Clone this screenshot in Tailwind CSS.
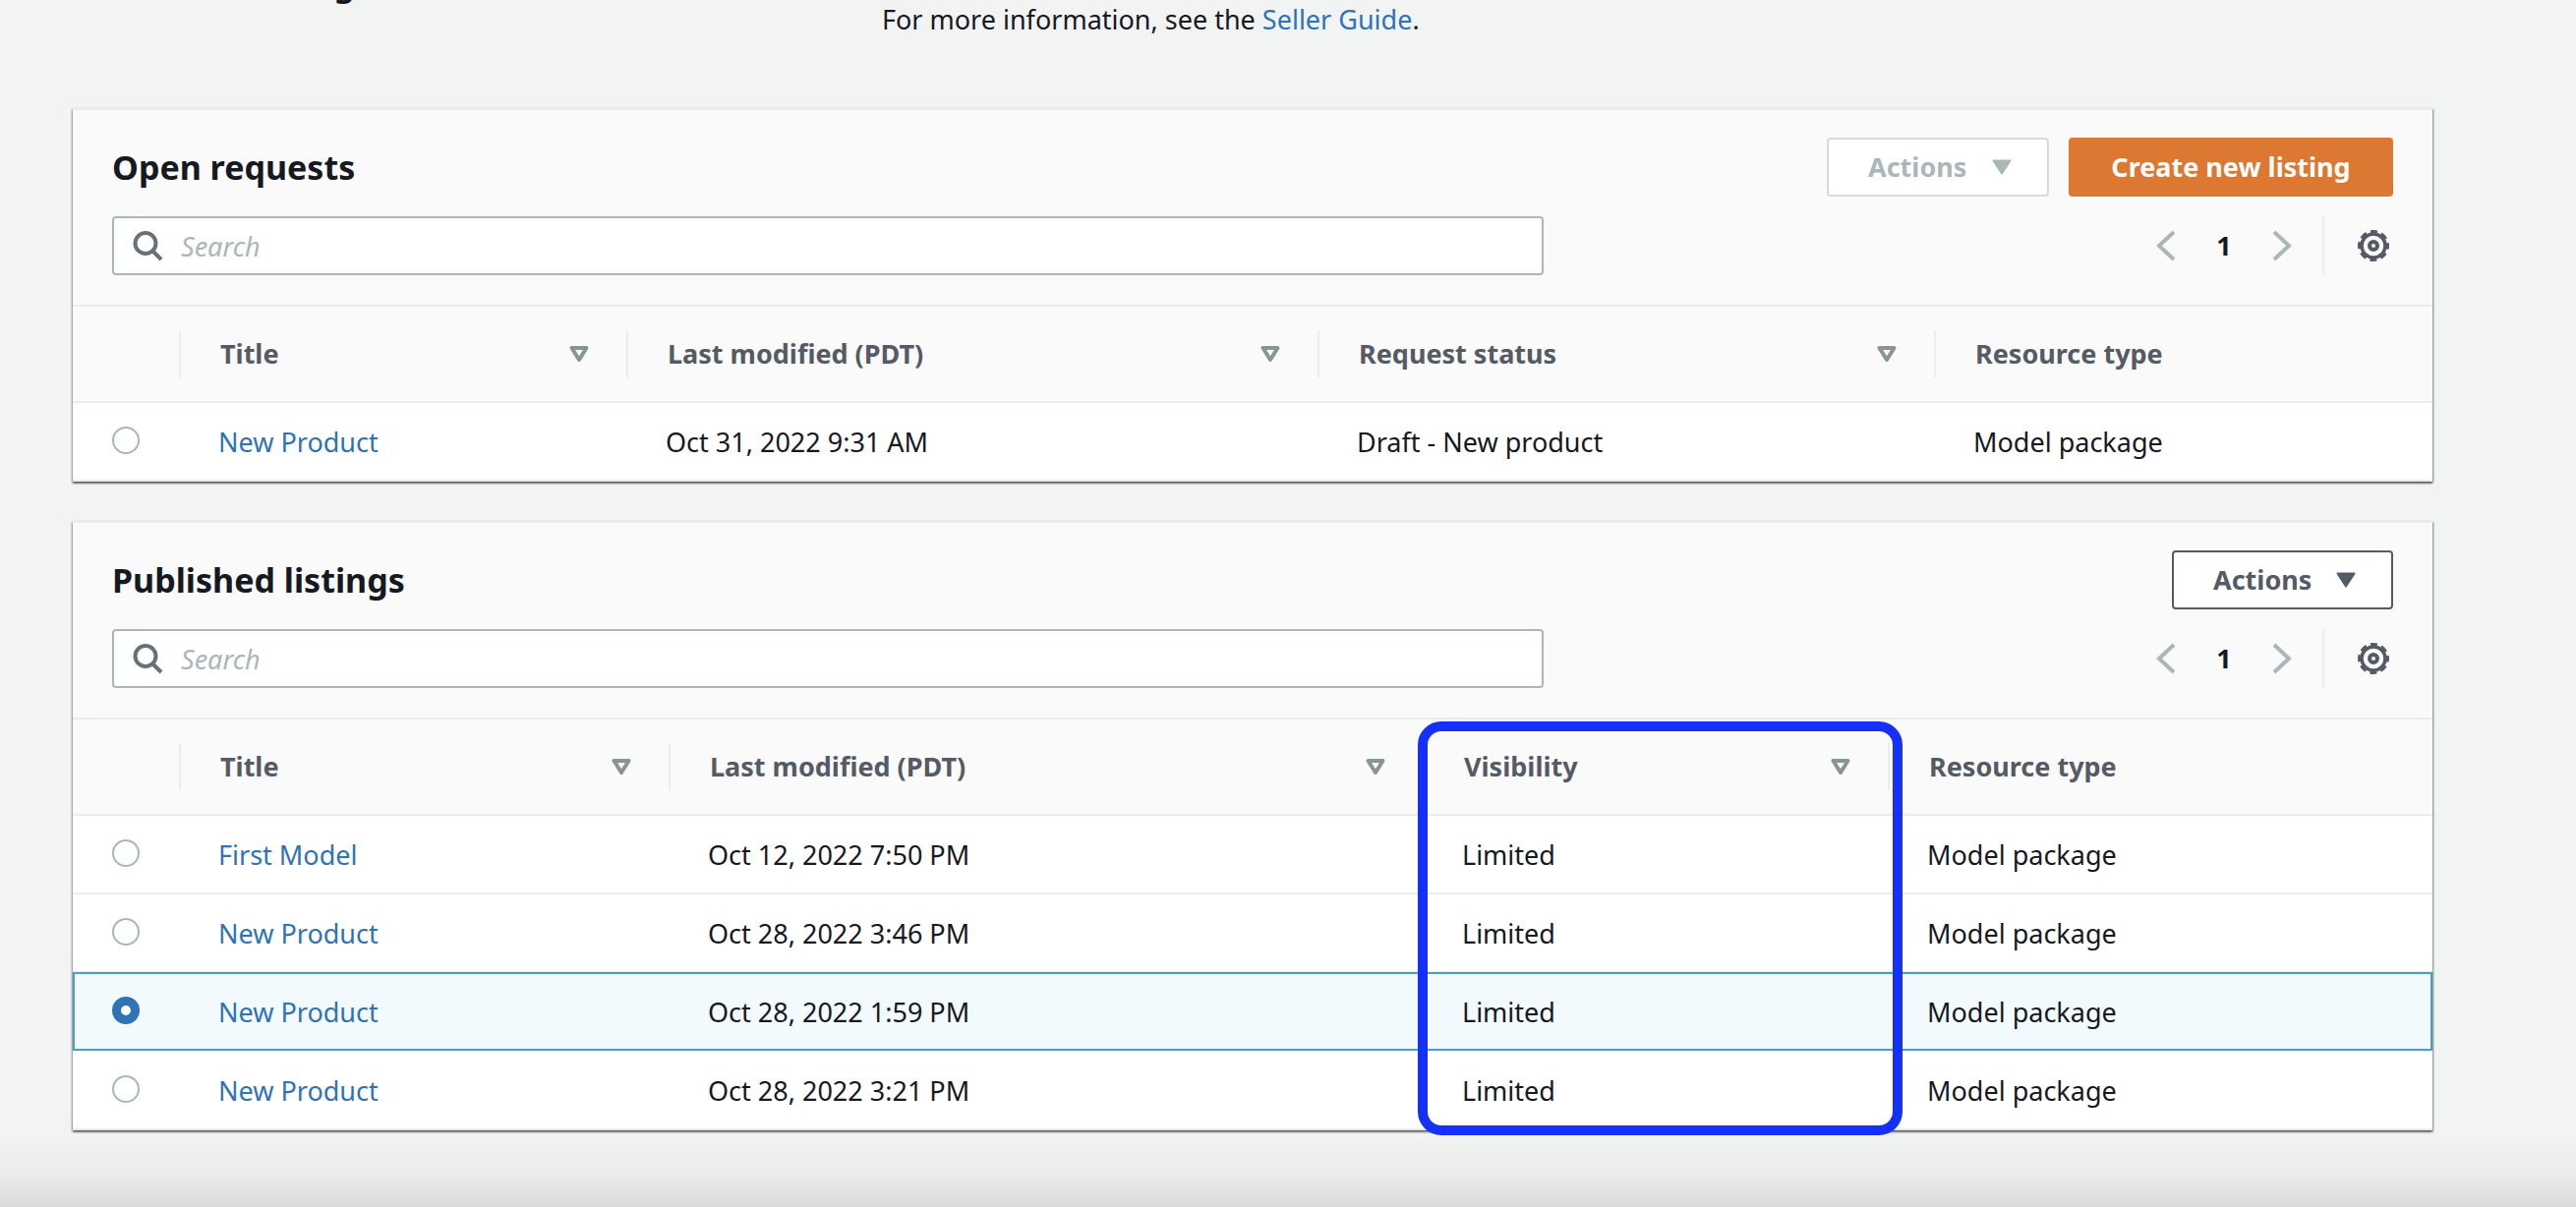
<!DOCTYPE html>
<html lang="en">
<head>
<meta charset="utf-8">
<title>Machine learning</title>
<script src="https://cdn.jsdelivr.net/npm/@tailwindcss/browser@4"></script>
</head>
<body class="min-h-screen overflow-x-hidden bg-[#f2f3f3] font-['Noto_Sans',sans-serif] text-[27px] leading-9 text-[#16191f]">
<svg class="hidden">
  <symbol id="sort" viewBox="0 0 20 16"><path d="M2.500 2h15L10 14z" fill="none" stroke="currentColor" stroke-width="4" stroke-linejoin="round"/></symbol>
  <symbol id="caret" viewBox="0 0 20 16"><path d="M1.500 1.500h17L10 14.500z" fill="currentColor" stroke="currentColor" stroke-width="2" stroke-linejoin="round"/></symbol>
  <symbol id="search" viewBox="0 0 32 32"><circle cx="14" cy="13.500" r="10.500" fill="none" stroke="currentColor" stroke-width="4"/><path d="M21 21l9 9" stroke="currentColor" stroke-width="4"/></symbol>
  <symbol id="prev" viewBox="0 0 20 32"><path d="M18 2L3 16l15 14" fill="none" stroke="currentColor" stroke-width="4"/></symbol>
  <symbol id="next" viewBox="0 0 20 32"><path d="M2 2l15 14L2 30" fill="none" stroke="currentColor" stroke-width="4"/></symbol>
  <symbol id="gear" viewBox="0 0 32 32"><g fill="none" stroke="currentColor"><circle cx="16" cy="16" r="12" stroke-width="3.500"/><circle cx="16" cy="16" r="13.500" stroke-width="5" stroke-dasharray="6.600 4" stroke-dashoffset="3.300"/><circle cx="16" cy="16" r="4" stroke-width="4"/></g></symbol>
</svg>
<main class="ml-[74px] mr-[146px]">
  <header class="-mt-11 flex h-[154px] items-start">
    <h1 class="w-[823px] text-[33px] leading-14 font-bold">Machine learning</h1>
    <p class="pt-[46px]">For more information, see the <a href="#" class="text-[#2e73b8]">Seller Guide</a>.</p>
  </header>

  <section class="border-t-2 border-[#eaeded] bg-[#fafafa] shadow-[0_2px_2px_0_#00000066,1px_1px_2px_0_#00000055,-1px_1px_2px_0_#00000044]">
    <div class="px-10 pt-7 pb-[30px]">
      <div class="flex h-[60px] items-center gap-5">
        <h2 class="mr-auto text-[34px] font-bold">Open requests</h2>
        <button disabled class="flex h-full w-[226px] items-center justify-between rounded-sm border-2 border-[#d5dbdb] bg-white pr-9 pl-10 font-bold text-[#aab7b8]">Actions <svg class="h-4 w-5"><use href="#caret"/></svg></button>
        <button class="h-full w-[330px] rounded-sm bg-[#dd7832] font-bold text-white">Create new listing</button>
      </div>
      <div class="mt-5 flex h-[60px] items-center">
        <label class="flex h-full w-[1456px] items-center gap-[18px] rounded-sm border-2 border-[#aab7b8] bg-white px-[18px] text-[#687078]"><svg class="h-8 w-8"><use href="#search"/></svg><input type="search" aria-label="Search open requests" placeholder="Search" class="flex-1 pt-0.5 outline-none placeholder:text-[#aab7b8] placeholder:italic"></label>
        <nav class="ml-auto flex h-full items-center" aria-label="Pages">
          <button aria-label="Previous" class="w-5 text-[#aab7b8]"><svg class="h-8 w-5"><use href="#prev"/></svg></button>
          <button class="w-[98px] font-bold">1</button>
          <button aria-label="Next" class="w-5 text-[#aab7b8]"><svg class="h-8 w-5"><use href="#next"/></svg></button>
          <button aria-label="Settings" class="ml-[31px] flex h-full items-center border-l-2 border-[#eaeded] pr-1 pl-[34px] text-[#545b64]"><svg class="h-8 w-8"><use href="#gear"/></svg></button>
        </nav>
      </div>
    </div>
    <table class="w-full table-fixed text-left">
      <colgroup><col class="w-[110px]"><col class="w-[455px]"><col class="w-[703px]"><col class="w-[627px]"><col></colgroup>
      <thead class="border-y-2 border-[#eaeded] text-[#545b64]">
        <tr class="h-[98px]">
          <th class="p-0"><div class="h-12 border-r-2 border-[#eaeded]"></div></th>
          <th class="p-0"><div class="flex h-12 items-center justify-between border-r-2 border-[#eaeded] pr-[38px] pl-10">Title <svg class="h-4 w-5 text-[#879596]"><use href="#sort"/></svg></div></th>
          <th class="p-0"><div class="flex h-12 items-center justify-between border-r-2 border-[#eaeded] pr-[38px] pl-10">Last modified (PDT) <svg class="h-4 w-5 text-[#879596]"><use href="#sort"/></svg></div></th>
          <th class="p-0"><div class="flex h-12 items-center justify-between border-r-2 border-[#eaeded] pr-[38px] pl-10">Request status <svg class="h-4 w-5 text-[#879596]"><use href="#sort"/></svg></div></th>
          <th class="p-0"><div class="pl-10">Resource type</div></th>
        </tr>
      </thead>
      <tbody class="bg-white">
        <tr class="h-20 border-b-2 border-[#eaeded]">
          <td class="pb-0.5 pl-10"><input type="radio" name="request" aria-label="New Product" class="block size-7 appearance-none rounded-full border-2 border-[#aab7b8] bg-white checked:border-9 checked:border-[#2e73b8]"></td>
          <td class="pt-0.5 pl-[38px]"><a href="#" class="text-[#2e73b8]">New Product</a></td><td class="pt-0.5 pl-[38px]">Oct 31, 2022 9:31 AM</td><td class="pt-0.5 pl-[38px]">Draft - New product</td><td class="pt-0.5 pl-[38px]">Model package</td>
        </tr>
      </tbody>
    </table>
  </section>

  <section class="relative mt-10 border-t-2 border-[#eaeded] bg-[#fafafa] shadow-[0_2px_2px_0_#00000066,1px_1px_2px_0_#00000055,-1px_1px_2px_0_#00000044]">
    <div class="px-10 pt-7 pb-[30px]">
      <div class="flex h-[60px] items-center gap-5">
        <h2 class="mr-auto text-[34px] font-bold">Published listings</h2>
        <button class="flex h-full w-[225px] items-center justify-between rounded-sm border-2 border-[#545b64] bg-white pr-9 pl-10 font-bold text-[#545b64]">Actions <svg class="h-4 w-5"><use href="#caret"/></svg></button>
      </div>
      <div class="mt-5 flex h-[60px] items-center">
        <label class="flex h-full w-[1456px] items-center gap-[18px] rounded-sm border-2 border-[#aab7b8] bg-white px-[18px] text-[#687078]"><svg class="h-8 w-8"><use href="#search"/></svg><input type="search" aria-label="Search published listings" placeholder="Search" class="flex-1 pt-0.5 outline-none placeholder:text-[#aab7b8] placeholder:italic"></label>
        <nav class="ml-auto flex h-full items-center" aria-label="Pages">
          <button aria-label="Previous" class="w-5 text-[#aab7b8]"><svg class="h-8 w-5"><use href="#prev"/></svg></button>
          <button class="w-[98px] font-bold">1</button>
          <button aria-label="Next" class="w-5 text-[#aab7b8]"><svg class="h-8 w-5"><use href="#next"/></svg></button>
          <button aria-label="Settings" class="ml-[31px] flex h-full items-center border-l-2 border-[#eaeded] pr-1 pl-[34px] text-[#545b64]"><svg class="h-8 w-8"><use href="#gear"/></svg></button>
        </nav>
      </div>
    </div>
    <table class="w-full table-fixed text-left">
      <colgroup><col class="w-[110px]"><col class="w-[498px]"><col class="w-[767px]"><col class="w-[473px]"><col></colgroup>
      <thead class="border-y-2 border-[#eaeded] text-[#545b64]">
        <tr class="h-[98px]">
          <th class="p-0"><div class="h-12 border-r-2 border-[#eaeded]"></div></th>
          <th class="p-0"><div class="flex h-12 items-center justify-between border-r-2 border-[#eaeded] pr-[38px] pl-10">Title <svg class="h-4 w-5 text-[#879596]"><use href="#sort"/></svg></div></th>
          <th class="p-0"><div class="flex h-12 items-center justify-between border-r-2 border-[#eaeded] pr-[38px] pl-10">Last modified (PDT) <svg class="h-4 w-5 text-[#879596]"><use href="#sort"/></svg></div></th>
          <th class="p-0"><div class="flex h-12 items-center justify-between border-r-2 border-[#eaeded] pr-[38px] pl-10">Visibility <svg class="h-4 w-5 text-[#879596]"><use href="#sort"/></svg></div></th>
          <th class="p-0"><div class="pl-10">Resource type</div></th>
        </tr>
      </thead>
      <tbody class="bg-white">
        <tr class="h-20 border-b-2 border-[#eaeded]">
          <td class="pb-0.5 pl-10"><input type="radio" name="listing" aria-label="First Model" class="block size-7 appearance-none rounded-full border-2 border-[#aab7b8] bg-white checked:border-9 checked:border-[#2e73b8]"></td>
          <td class="pt-0.5 pl-[38px]"><a href="#" class="text-[#2e73b8]">First Model</a></td><td class="pt-0.5 pl-[38px]">Oct 12, 2022 7:50 PM</td><td class="pt-0.5 pl-[38px]">Limited</td><td class="pt-0.5 pl-[38px]">Model package</td>
        </tr>
        <tr class="h-20 border-b-2 border-[#eaeded]">
          <td class="pb-0.5 pl-10"><input type="radio" name="listing" aria-label="New Product, 3:46 PM" class="block size-7 appearance-none rounded-full border-2 border-[#aab7b8] bg-white checked:border-9 checked:border-[#2e73b8]"></td>
          <td class="pt-0.5 pl-[38px]"><a href="#" class="text-[#2e73b8]">New Product</a></td><td class="pt-0.5 pl-[38px]">Oct 28, 2022 3:46 PM</td><td class="pt-0.5 pl-[38px]">Limited</td><td class="pt-0.5 pl-[38px]">Model package</td>
        </tr>
        <tr class="h-20 bg-[#f2fafd] outline-2 -outline-offset-2 outline-[#48a0c7]">
          <td class="pb-1 pl-10"><input type="radio" name="listing" checked aria-label="New Product, 1:59 PM" class="block size-7 appearance-none rounded-full border-2 border-[#aab7b8] bg-white checked:border-9 checked:border-[#2e73b8]"></td>
          <td class="pl-[38px]"><a href="#" class="text-[#2e73b8]">New Product</a></td><td class="pl-[38px]">Oct 28, 2022 1:59 PM</td><td class="pl-[38px]">Limited</td><td class="pl-[38px]">Model package</td>
        </tr>
        <tr class="h-20 border-b-2 border-[#eaeded]">
          <td class="pb-0.5 pl-10"><input type="radio" name="listing" aria-label="New Product, 3:21 PM" class="block size-7 appearance-none rounded-full border-2 border-[#aab7b8] bg-white checked:border-9 checked:border-[#2e73b8]"></td>
          <td class="pt-0.5 pl-[38px]"><a href="#" class="text-[#2e73b8]">New Product</a></td><td class="pt-0.5 pl-[38px]">Oct 28, 2022 3:21 PM</td><td class="pt-0.5 pl-[38px]">Limited</td><td class="pt-0.5 pl-[38px]">Model package</td>
        </tr>
      </tbody>
    </table>
    <!-- highlight around the Visibility column -->
    <div class="pointer-events-none absolute -bottom-[5px] left-[1368px] h-[421px] w-[493px] rounded-3xl border-10 border-[#1531f9]"></div>
  </section>
</main>
<div class="pointer-events-none fixed inset-x-0 bottom-0 h-[70px] bg-linear-to-b from-black/0 via-black/3 to-black/10"></div>
</body>
</html>
